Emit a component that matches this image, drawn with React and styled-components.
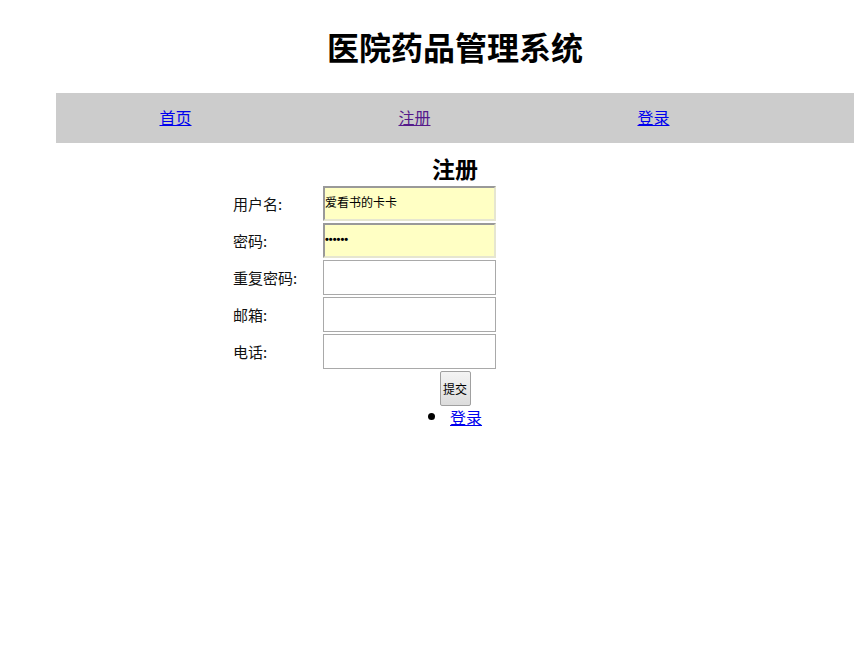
import { Fragment } from 'react';
import styled, { createGlobalStyle } from 'styled-components';

const GlobalStyle = createGlobalStyle`
	body {
		margin: 0;
		background: #fff;
		font-family: "Liberation Sans", "Noto Sans CJK SC", sans-serif;
		color: #000;
	}
`;

const Page = styled.div`
	margin-left: 56px;
	width: 798px;
	padding-top: 25px;
`;

const Title = styled.h1`
	margin: 0;
	height: 68px;
	text-align: center;
	font-size: 32px;
	line-height: 42px;
	font-weight: 700;
	font-family: "Noto Sans CJK SC", sans-serif;
`;

const Nav = styled.ul`
	display: flex;
	margin: 0;
	padding: 0;
	list-style: none;
	height: 50px;
	background-color: #cccccc;
`;

const NavItem = styled.li`
	width: 239px;
	text-align: center;
	line-height: 48px;
	font-size: 16px;
	font-family: "Noto Sans CJK SC", sans-serif;

	a {
		color: ${(p) => (p.visited ? '#551a8b' : '#0000ee')};
		text-decoration: underline;
	}
`;

const FormTitle = styled.h2`
	margin: 10px 0 0;
	text-align: center;
	font-size: 23px;
	line-height: 30px;
	font-weight: 700;
	font-family: "Noto Sans CJK SC", sans-serif;
`;

const Form = styled.form`
	display: flex;
	flex-direction: column;
`;

const Rows = styled.div`
	display: grid;
	grid-template-columns: 90px 173px;
	row-gap: 2px;
	margin-left: 177px;
	margin-top: 3px;
`;

const Label = styled.label`
	font-size: 15px;
	line-height: 35px;
	font-family: "Noto Sans CJK SC", sans-serif;
	color: #111;
`;

const Input = styled.input`
	box-sizing: border-box;
	width: 173px;
	height: 35px;
	margin: 0;
	padding: 0 0 4px;
	font-size: ${(p) => (p.type === 'password' ? '11px' : '12px')};
	font-weight: ${(p) => (p.type === 'password' ? 700 : 400)};
	font-family: ${(p) =>
		p.type === 'password'
			? '"Liberation Sans", sans-serif'
			: '"Noto Sans CJK SC", sans-serif'};
	outline: none;
	background-color: ${(p) => (p.filled ? '#ffffc4' : '#fff')};
	border: ${(p) => (p.filled ? '2px solid' : '1px solid #a9a9a9')};
	border-color: ${(p) => (p.filled ? '#999 #e6e6d0 #e6e6d0 #999' : '#a9a9a9')};
	color: #000;
`;

const Submit = styled.button`
	align-self: center;
	margin-top: 2px;
	width: 31px;
	height: 35px;
	padding: 0;
	font-size: 12px;
	font-family: "Noto Sans CJK SC", sans-serif;
	border: 1px solid #a0a0a0;
	border-radius: 2px;
	background: linear-gradient(#f4f4f4, #dcdcdc);
	color: #000;
`;

const LinkList = styled.ul`
	margin: 0;
	padding: 0 0 0 393px;
	font-size: 16px;
	line-height: 21px;
	font-family: "Noto Sans CJK SC", sans-serif;

	li {
		list-style: disc;
		padding-left: 1px;
	}
	li::marker {
		font-size: 18px;
	}
	a {
		color: #0000ee;
	}
`;

const fields = [
	{ label: '用户名:', type: 'text', value: '爱看书的卡卡', filled: true },
	{ label: '密码:', type: 'password', value: '123456', filled: true },
	{ label: '重复密码:', type: 'password', value: '' },
	{ label: '邮箱:', type: 'text', value: '' },
	{ label: '电话:', type: 'text', value: '' },
];

function App() {
	return (
		<>
			<GlobalStyle />
			<Page>
				<Title>医院药品管理系统</Title>
				<Nav>
					<NavItem>
						<a href="#index">首页</a>
					</NavItem>
					<NavItem visited>
						<a href="#register">注册</a>
					</NavItem>
					<NavItem>
						<a href="#login">登录</a>
					</NavItem>
				</Nav>
				<FormTitle>注册</FormTitle>
				<Form onSubmit={(e) => e.preventDefault()}>
					<Rows>
						{fields.map((f) => (
							<Fragment key={f.label}>
								<Label>{f.label}</Label>
								<Input type={f.type} defaultValue={f.value} filled={f.filled} />
							</Fragment>
						))}
					</Rows>
					<Submit type="submit">提交</Submit>
				</Form>
				<LinkList>
					<li>
						<a href="#login">登录</a>
					</li>
				</LinkList>
			</Page>
		</>
	);
}

export default App;
